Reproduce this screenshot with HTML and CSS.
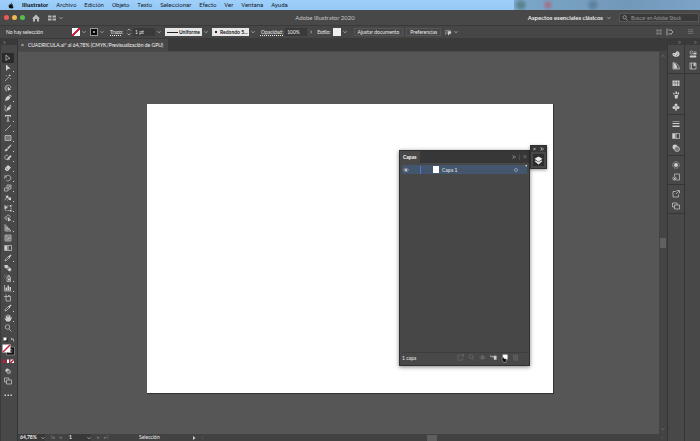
FILE: index.html
```html
<!DOCTYPE html>
<html lang="es">
<head>
<meta charset="utf-8">
<title>Adobe Illustrator 2020</title>
<link rel="stylesheet" href="styles.css">
</head>
<body>
<svg class="defs" aria-hidden="true">
  <symbol id="chev" viewBox="0 0 8 8"><path class="ln" d="M1 2.5l3 3 3-3"/></symbol>
  <symbol id="right" viewBox="0 0 8 8"><path class="ln" d="M2.500 1l3 3-3 3"/></symbol>
  <symbol id="dbl" viewBox="0 0 8 8"><path class="ln" d="M1 1l3 3-3 3M4 1l3 3-3 3"/></symbol>
  <symbol id="select" viewBox="0 0 16 16"><path class="ln" d="M4 2v11l3-3 5-1z"/></symbol>
  <symbol id="direct" viewBox="0 0 16 16"><path d="M4 1v13l4-4 5-1z"/></symbol>
  <symbol id="wand" viewBox="0 0 16 16"><path class="ln" d="M2 14l8-8M11 1v4M9 3h5M4 3l2 2M12 8l2 2"/></symbol>
  <symbol id="lasso" viewBox="0 0 16 16"><path class="ln" d="M7 12C1 13 0 4 6 3c6-2 10 3 6 6M4 9c-3 2 2 3 0 6M6 5c-2 2 1 5 2 3"/><path d="M8 5v9l2-2 4 0z"/></symbol>
  <symbol id="pen" viewBox="0 0 16 16"><path d="M2 14l2-7 5-4 4 4-4 5zM10 2l2-1 3 3-1 2z"/></symbol>
  <symbol id="curve" viewBox="0 0 16 16"><path d="M5 14l1-6 4-4 4 4-4 4zM11 3l1-2 3 3-1 2z"/><path class="ln" d="M1 3c4 0 0 6 1 9s3 2 4 2"/></symbol>
  <symbol id="type" viewBox="0 0 16 16"><path d="M2 2h12v4h-1l-1-2H9v9l2 1v1H5v-1l2-1V4H4L3 6H2z"/></symbol>
  <symbol id="line" viewBox="0 0 16 16"><path class="ln" d="M2 14L14 2"/></symbol>
  <symbol id="rect" viewBox="0 0 16 16"><path class="ln dimfill" d="M2 3h12v10H2z"/></symbol>
  <symbol id="brush" viewBox="0 0 16 16"><path d="M14 1l1 1-6 8-3-2zM5 9l3 2c-1 3-4 4-7 3 2-1 1-4 4-5z"/></symbol>
  <symbol id="shaper" viewBox="0 0 16 16"><path class="ln" d="M8 3C3 1 0 6 2 9s7 3 10 1"/><path d="M6 12l1-4 6-6 2 3-6 6z"/></symbol>
  <symbol id="eraser" viewBox="0 0 16 16"><path d="M2 8l6-6 6 5-6 7H5l-3-3z"/><path class="dk" d="M4 8l4 4"/></symbol>
  <symbol id="rotate" viewBox="0 0 16 16"><path class="ln" d="M4 4c6-5 13 3 8 8-2 2-5 2-7 1M1 10c0-1 0-3 2-5M2 2v4h4"/></symbol>
  <symbol id="scale" viewBox="0 0 16 16"><path class="ln" d="M1 8h7v6H1zM6 8V2h8v8H8M8 8l4-4M9 4h3v3"/></symbol>
  <symbol id="width" viewBox="0 0 16 16"><path class="ln" d="M1 12c4-1 4-7 6-10M3 4l10 8M7 13c2-3 3-6 7-6"/><path d="M5 4h4v4H5zM10 8h4v4h-4z"/></symbol>
  <symbol id="free" viewBox="0 0 16 16"><path class="ln dash" d="M3 4h11v9H3z"/><path d="M1 2v9l3-2 4-1zM12 2h3v3h-3zM12 12h3v3h-3z"/></symbol>
  <symbol id="builder" viewBox="0 0 16 16"><path class="ln" d="M7 12C1 12 0 5 5 5c1-5 9-3 7 2M4 8h5"/><path d="M8 6v9l3-2h4z"/></symbol>
  <symbol id="persp" viewBox="0 0 16 16"><path class="ln" d="M2 1v13h12L2 1M2 6l9 6M6 5v9M2 10h9"/></symbol>
  <symbol id="mesh" viewBox="0 0 16 16"><path class="ln" d="M2 2h12v12H2zM2 6c5-2 7 3 12 0M2 10c5 2 7-2 12 0M6 2c-2 5 2 7 0 12M10 2c2 5-2 7 0 12"/></symbol>
  <symbol id="grad" viewBox="0 0 16 16"><path class="ln" d="M1 3h14v10H1z"/><path class="mid" d="M5 4h5v8H5z"/><path d="M2 4h4v8H2z"/></symbol>
  <symbol id="drop" viewBox="0 0 16 16"><path class="ln" d="M2 14l1-4 6-5 2 2-6 6z"/><path d="M8 4l2 0 3-3 2 2-3 3v2l-1 1z"/></symbol>
  <symbol id="blend" viewBox="0 0 16 16"><path d="M1 2h6l2 4-4 3-4-2z"/><path class="ln" d="M5 6l6 1 3 3-1 4-4-1-3-4z"/><circle cx="11" cy="11" r="3"/></symbol>
  <symbol id="spray" viewBox="0 0 16 16"><path class="ln" d="M6 6h7v9H6zM8 6V3h3v3M1 2h1M3 5h1M1 8h1M4 2h1"/><path d="M8 9h4v4H8z"/></symbol>
  <symbol id="graph" viewBox="0 0 16 16"><path class="ln" d="M1 2v12h14"/><path d="M3 7h3v6H3zM7 3h3v10H7zM11 6h3v7h-3z"/></symbol>
  <symbol id="board" viewBox="0 0 16 16"><path class="ln" d="M4 5h9v9H4zM4 1v4M0 5h4M8 3h3l2 2"/></symbol>
  <symbol id="hand" viewBox="0 0 16 16"><path d="M5 15L1 9l1-1 3 2-2-6 2-1 2 4V1h2v6l2-5 2 1-1 5 3-2 1 1-4 8z"/></symbol>
  <symbol id="zoom" viewBox="0 0 16 16"><circle class="ln" cx="7" cy="6" r="4.500"/><path class="ln" d="M10 10l5 5"/></symbol>
  <symbol id="palette" viewBox="0 0 16 16"><path d="M2 6h5C8 0 16 3 15 9c-1 5-8 6-12 3-3-2-2-4-1-6z"/><path class="dk" d="M4 9h2M8 11h2M11 9h1M11 5v2"/></symbol>
  <symbol id="guide" viewBox="0 0 16 16"><path class="ln" d="M2 1v13h13C14 6 9 2 2 1z"/><path d="M3 2c4 1 7 4 8 11H3z"/></symbol>
  <symbol id="swatches" viewBox="0 0 16 16"><path d="M1 3h14v11H1z"/><path class="dk" d="M1 8h14M6 3v11M11 3v11"/></symbol>
  <symbol id="brushes" viewBox="0 0 16 16"><path d="M5 8h7l-1 7H6zM7 1h3v5H7zM2 3l3 1v3H3zM14 2l-3 2v3h3z"/></symbol>
  <symbol id="club" viewBox="0 0 16 16"><circle cx="8" cy="4" r="3"/><circle cx="4" cy="9" r="3"/><circle cx="12" cy="9" r="3"/><path d="M7 7h2l1 8H6z"/></symbol>
  <symbol id="lines" viewBox="0 0 16 16"><path d="M1 2h14v1H1zM1 6h14v2H1zM1 11h14v3H1z"/></symbol>
  <symbol id="transp" viewBox="0 0 16 16"><circle cx="6" cy="6" r="5"/><circle class="ln midfill" cx="10" cy="10" r="5"/></symbol>
  <symbol id="sun" viewBox="0 0 16 16"><circle cx="8" cy="8" r="4"/><circle class="ln dash" cx="8" cy="8" r="6.500"/></symbol>
  <symbol id="style" viewBox="0 0 16 16"><path class="ln" d="M5 6V2h10v12H9"/><circle class="ln" cx="5" cy="11" r="3.500"/><path d="M4 10h3v3H4z"/></symbol>
  <symbol id="export" viewBox="0 0 16 16"><path class="ln" d="M8 3H2v11h11V9M8 8l6-6M9 1h6v6"/></symbol>
  <symbol id="boards" viewBox="0 0 16 16"><path class="ln" d="M5 10H1V2h9v4M5 6h10v8H5z"/></symbol>
  <symbol id="props" viewBox="0 0 16 16"><path class="ln" d="M10 4h5M1 13h14"/><circle class="ln" cx="5" cy="5" r="3"/><path d="M9 6h6v3H9zM2 11h12v4H2z"/></symbol>
  <symbol id="lib" viewBox="0 0 16 16"><path class="ln" d="M2 2h12v12H2zM5 2v12"/><path d="M9 2h4v6H9z"/></symbol>
  <symbol id="layers" viewBox="0 0 16 16"><path d="M8 1l7 4-7 5-7-5z"/><path d="M1 9l2-1 5 3 5-3 2 1-7 6z"/></symbol>
  <symbol id="eye" viewBox="0 0 16 16"><path class="ln" d="M1 8c4-6 10-6 14 0-4 5-10 5-14 0z"/><circle cx="8" cy="8" r="3"/></symbol>
  <symbol id="menu" viewBox="0 0 16 16"><path class="ln" d="M2 3h12M2 7h12M2 11h12"/></symbol>
</svg>
<div class="app">
  <nav class="menubar" aria-label="Menú principal">
    <svg class="apple" viewBox="0 0 16 16"><path d="M11 0c0 2-1 3-3 4 0-2 1-4 3-4zM8 5c2-1 4-1 6 1-3 2-2 5 1 6-2 4-4 5-7 3-3 2-5-1-6-4C1 6 4 3 8 5z"/></svg>
    <a class="strong" href="#">Illustrator</a><a href="#">Archivo</a><a href="#">Edición</a><a href="#">Objeto</a><a href="#">Texto</a><a href="#">Seleccionar</a><a href="#">Efecto</a><a href="#">Ver</a><a href="#">Ventana</a><a href="#">Ayuda</a>
    <div class="behind"></div>
  </nav>
  <header class="titlebar">
    <div class="left">
      <span class="light red"></span><span class="light yellow"></span><span class="light green"></span>
      <svg class="home" viewBox="0 0 16 16"><path d="M8 1l8 8h-2v6h-4v-5H6v5H2V9H0z"/></svg>
      <svg class="arrange" viewBox="0 0 16 12"><path d="M0 1h7v4H0zM9 1h7v4H9zM0 7h7v4H0zM9 7h7v4H9z"/></svg>
      <svg class="tiny"><use href="#chev"/></svg>
    </div>
    <h1>Adobe Illustrator 2020</h1>
    <div class="right">
      <button class="workspace">Aspectos esenciales clásicos</button>
      <svg class="tiny"><use href="#chev"/></svg>
      <label class="search"><svg class="mini"><use href="#zoom"/></svg><input type="text" aria-label="Buscar" placeholder="Buscar en Adobe Stock"></label>
    </div>
  </header>
  <div class="control">
    <span class="status-text">No hay selección</span>
    <div class="field"><button class="swatch none" aria-label="Relleno"></button><svg class="tiny"><use href="#chev"/></svg></div>
    <div class="field"><button class="swatch stroke" aria-label="Trazo"></button><svg class="tiny"><use href="#chev"/></svg></div>
    <div class="field"><label class="under" for="trazo">Trazo:</label><svg class="spin" viewBox="0 0 8 16"><path class="ln" d="M1 5l3-3 3 3M1 11l3 3 3-3"/></svg><input id="trazo" class="num" type="text" value="1 pt"><svg class="tiny"><use href="#chev"/></svg></div>
    <div class="field"><select class="light-select dashline" aria-label="Perfil"><option>Uniforme</option></select><svg class="tiny"><use href="#chev"/></svg></div>
    <div class="field"><select class="light-select bullet" aria-label="Pincel"><option>Redondo 5...</option></select><svg class="tiny"><use href="#chev"/></svg></div>
    <div class="field"><label class="under" for="opac">Opacidad:</label><input id="opac" class="num" type="text" value="100%"><svg class="tiny"><use href="#right"/></svg></div>
    <div class="field"><span>Estilo:</span><button class="swatch white" aria-label="Estilo"></button><svg class="tiny"><use href="#chev"/></svg></div>
    <div class="buttons"><button>Ajustar documento</button><button>Preferencias</button></div>
    <div class="field"><svg class="icon small" viewBox="0 0 16 16"><path class="ln dash" d="M1 3v10M4 3h10M4 3v8"/><path d="M6 5h8v6h-3l-4 4z"/></svg><svg class="tiny"><use href="#chev"/></svg></div>
    <div class="endicons">
      <svg class="icon dim" viewBox="0 0 16 16"><path d="M3 3h4v4H3zM9 3h4v4H9zM3 9h4v4H3zM9 9h4v4H9z"/></svg>
      <svg class="icon" viewBox="0 0 16 16"><path class="ln" d="M2 1v14M5 4h6M5 12h6M10 4l4 4-4 4"/></svg>
      <svg class="icon dim last"><use href="#menu"/></svg>
    </div>
  </div>
  <main class="work">
    <aside class="tools" aria-label="Herramientas">
      <div class="grip"><svg class="tiny"><use href="#dbl"/></svg></div>
      <div class="list">
        <button class="tool on" aria-label="Selección"><svg><use href="#select"/></svg></button>
        <button class="tool more" aria-label="Selección directa"><svg><use href="#direct"/></svg></button>
        <button class="tool" aria-label="Varita"><svg><use href="#wand"/></svg></button>
        <button class="tool" aria-label="Lazo"><svg><use href="#lasso"/></svg></button>
        <button class="tool more" aria-label="Pluma"><svg><use href="#pen"/></svg></button>
        <button class="tool" aria-label="Curvatura"><svg><use href="#curve"/></svg></button>
        <button class="tool more" aria-label="Texto"><svg><use href="#type"/></svg></button>
        <button class="tool more" aria-label="Línea"><svg><use href="#line"/></svg></button>
        <button class="tool more" aria-label="Rectángulo"><svg><use href="#rect"/></svg></button>
        <button class="tool more" aria-label="Pincel"><svg><use href="#brush"/></svg></button>
        <button class="tool more" aria-label="Shaper"><svg><use href="#shaper"/></svg></button>
        <button class="tool more" aria-label="Borrador"><svg><use href="#eraser"/></svg></button>
        <button class="tool more" aria-label="Rotar"><svg><use href="#rotate"/></svg></button>
        <button class="tool more" aria-label="Escala"><svg><use href="#scale"/></svg></button>
        <button class="tool more" aria-label="Anchura"><svg><use href="#width"/></svg></button>
        <button class="tool more" aria-label="Transformación libre"><svg><use href="#free"/></svg></button>
        <button class="tool more" aria-label="Creador de formas"><svg><use href="#builder"/></svg></button>
        <button class="tool more" aria-label="Perspectiva"><svg><use href="#persp"/></svg></button>
        <button class="tool" aria-label="Malla"><svg><use href="#mesh"/></svg></button>
        <button class="tool" aria-label="Degradado"><svg><use href="#grad"/></svg></button>
        <button class="tool more" aria-label="Cuentagotas"><svg><use href="#drop"/></svg></button>
        <button class="tool" aria-label="Fusión"><svg><use href="#blend"/></svg></button>
        <button class="tool more" aria-label="Rociar símbolos"><svg><use href="#spray"/></svg></button>
        <button class="tool more" aria-label="Gráfica"><svg><use href="#graph"/></svg></button>
        <button class="tool" aria-label="Mesa de trabajo"><svg><use href="#board"/></svg></button>
        <button class="tool more" aria-label="Sector"><svg><use href="#drop"/></svg></button>
        <button class="tool more" aria-label="Mano"><svg><use href="#hand"/></svg></button>
        <button class="tool" aria-label="Zoom"><svg><use href="#zoom"/></svg></button>
      </div>
      <svg class="paint" viewBox="0 0 28 58">
        <path class="blk" d="M5 3h6v6H5z"/><path class="wh" d="M3 1h6v6H3z"/><path class="ln" d="M18 4h5v5M20 2l-2 2 2 2"/>
        <path class="blk ring" d="M11 22h12v12H11z"/><path class="edge" d="M9 20h16v16H9zM14 25h6v6h-6z"/>
        <path class="wh" d="M1 15h16v16H1z"/><path class="redln" d="M2 30L16 16"/>
        <path class="rd" d="M1 45h6v7H1z"/><path class="wh" d="M10 45h4v7h-4zM17 45h7v7h-7z"/><path class="rd" d="M14 45h2v7h-2z"/><path class="redln" d="M17 52l7-7"/>
      </svg>
      <button class="tool" aria-label="Modo de dibujo"><svg class="mode-icon"><use href="#transp"/></svg></button>
      <button class="tool" aria-label="Modo de pantalla"><svg><use href="#boards"/></svg></button>
      <button class="tool dots" aria-label="Más"><svg viewBox="0 0 16 16"><path d="M1 7h3v3H1zM7 7h3v3H7zM13 7h3v3h-3z"/></svg></button>
    </aside>
    <section class="doc">
      <div class="tabs"><div class="tab"><button class="x" aria-label="Cerrar">×</button><span>CUADRICULA.ai* al 64,78% (CMYK/Previsualización de GPU)</span></div></div>
      <div class="canvas">
        <div class="artboard"></div>
        <section class="panel" aria-label="Capas">
          <div class="panel-head"><h2>Capas</h2><div class="panel-tools"><svg class="tiny"><use href="#dbl"/></svg><span>|</span><svg class="tiny"><use href="#menu"/></svg></div></div>
          <div class="layers"><div class="layer"><svg class="eye"><use href="#eye"/></svg><span class="bar"></span><span class="thumb"></span><span class="name">Capa 1</span><span class="target"></span><span class="corner"></span></div></div>
          <div class="panel-foot"><span>1 capa</span><div class="acts">
            <svg class="faint"><use href="#export"/></svg><svg class="faint"><use href="#zoom"/></svg><svg class="faint"><use href="#eye"/></svg>
            <svg viewBox="0 0 16 16"><path d="M8 4h7v9H9z"/><path class="ln" d="M1 3v3h6M5 4l2 2-2 2"/></svg>
            <svg class="new" viewBox="0 0 16 20"><path class="wh" d="M4 1h11v11H4z"/><path class="blk cursor" d="M3 8l2-2 2 4 6 1-2 8H6l-4-6z"/></svg>
            <svg class="faint" viewBox="0 0 16 16"><path class="ln" d="M2 4h12M4 4v10h8V4M6 2h4M7 6v6M9 6v6"/></svg>
          </div></div>
        </section>
        <div class="flyout"><div class="flyhead"><span>×</span><svg class="tiny"><use href="#dbl"/></svg></div><button aria-label="Capas"><svg><use href="#layers"/></svg></button></div>
      </div>
      <div class="vscroll"><svg class="tiny" viewBox="0 0 8 8"><path class="ln" d="M1 5.500l3-3 3 3"/></svg><span class="vthumb"></span><svg class="tiny"><use href="#chev"/></svg></div>
      <footer class="status">
        <div class="zoomlevel"><span>64,78%</span><svg class="tiny"><use href="#chev"/></svg></div>
        <div class="nav faint"><span>I◂</span><span>◂</span></div>
        <div class="page"><span>1</span><svg class="tiny"><use href="#chev"/></svg></div>
        <div class="nav faint"><span>▸</span><span>▸I</span></div>
        <span class="mode">Selección</span><svg class="tiny play" viewBox="0 0 8 8"><path d="M2 0l5 4-5 4z"/></svg><span class="faint">‹</span>
        <div class="hscroll"><span class="hthumb"></span></div><span class="end faint">›</span>
      </footer>
    </section>
    <aside class="dock">
      <div class="grip"><svg class="tiny"><use href="#dbl"/></svg></div>
      <div class="group"><svg><use href="#palette"/></svg><svg><use href="#guide"/></svg></div>
      <div class="group"><svg><use href="#swatches"/></svg><svg><use href="#brushes"/></svg><svg><use href="#club"/></svg></div>
      <div class="group"><svg><use href="#lines"/></svg><svg><use href="#grad"/></svg><svg><use href="#transp"/></svg></div>
      <div class="group"><svg><use href="#sun"/></svg><svg><use href="#style"/></svg></div>
      <div class="group"><svg><use href="#export"/></svg><svg><use href="#boards"/></svg></div>
    </aside>
    <aside class="dock">
      <div class="grip"><svg class="tiny"><use href="#dbl"/></svg></div>
      <div class="group"><svg><use href="#props"/></svg><svg><use href="#lib"/></svg></div>
    </aside>
  </main>
</div>
</body>
</html>
```
FILE: styles.css
```css
* { box-sizing: border-box; }
body { margin: 0; font: 5px/8px Lato, "Noto Sans", sans-serif; color: #ececec; background: #484848; }
button, input, select { font: inherit; color: inherit; margin: 0; padding: 0; border: 0; background: none; border-radius: 0; appearance: none; outline: 0; }
h1, h2 { margin: 0; font: inherit; }
svg { display: block; flex: none; fill: #cecece; }
.defs { position: absolute; width: 0; height: 0; }
.ln { fill: none; stroke: #c4c4c4; stroke-width: 1.5; }
.dimfill { fill: #777; }
.midfill { fill: #777; }
.mid { fill: #888; }
.dash { stroke-dasharray: 2 1; }
.dk { fill: none; stroke: #484848; stroke-width: 1; }
.wh { fill: #fff; }
.blk { fill: #111; }
.rd { fill: #b3203f; }
.redln { stroke: #c51f3c; stroke-width: 3; }
.edge { fill: none; stroke: #aaa; stroke-width: 1; }
.ring { stroke: #111; stroke-width: 3; }
.cursor { stroke: #ddd; stroke-width: 1; }
.tiny { width: 4px; height: 4px; }
.icon { width: 8px; height: 8px; }
.small { width: 7px; height: 7px; }
.dim { opacity: .5; }
.faint { opacity: .3; }
.app { display: flex; flex-direction: column; min-height: 100vh; }

.menubar { display: flex; align-items: center; gap: 8px; height: 10px; padding-left: 8px; background: linear-gradient(#9fcffa, #94c8f6); color: #16202b; font: 6px/10px Roboto, sans-serif; }
.menubar a { color: inherit; text-decoration: none; }
.menubar .strong { font-weight: 700; }
.apple { width: 6px; height: 7px; fill: #111; }
.behind { width: 186px; height: 10px; margin-left: auto; background: radial-gradient(circle at 7px 5px, #5a8490 2px, transparent 7px), radial-gradient(circle at 34px 5px, #a07490 1px, transparent 6px), radial-gradient(circle at 79px 5px, #5e83a0 2px, transparent 7px), linear-gradient(90deg, #7ba7c8, #7298b8 60%, #7ba4c6); }

.titlebar { display: grid; grid-template-columns: 1fr auto 1fr; align-items: center; height: 15px; background: #484848; }
.titlebar h1 { font-size: 6px; color: #c6c6c6; margin-right: 50px; }
.left, .right, .field, .buttons, .endicons { display: flex; align-items: center; }
.left { gap: 3px; padding-left: 4px; }
.light { width: 5px; height: 5px; border-radius: 50%; }
.red { background: #ee5a55; }
.yellow { background: #edb94a; }
.green { background: #55c14b; }
.home { width: 8px; height: 8px; margin-left: 4px; fill: #bbb; }
.arrange { width: 8px; height: 6px; margin-left: 5px; fill: #b5b5b5; }
.titlebar .right { justify-content: flex-end; gap: 5px; padding-right: 3px; }
.workspace { font-size: 6px; font-weight: 700; color: #e8e8e8; }
.search { display: flex; align-items: center; gap: 3px; width: 80px; height: 9px; margin-left: 4px; padding-left: 2px; border: 1px solid #555; background: #393939; }
.titlebar .right { padding-right: 1px; gap: 4px; }
.search input { width: 62px; height: 7px; }
.search input::placeholder { color: #999; opacity: 1; }
.mini { width: 6px; height: 6px; }

.control { display: flex; align-items: center; gap: 4px; height: 14px; padding: 0 6px; background: #464646; border-top: 1px solid #3a3a3a; border-bottom: 1px solid #3a3a3a; white-space: nowrap; }
.status-text { width: 62px; }
.field { gap: 2px; }
.swatch { width: 8px; height: 8px; }
.none { background: linear-gradient(135deg, #fff 40%, #c51f3c 44%, #c51f3c 56%, #fff 60%); }
.stroke { background: #999; border: 3px solid #0a0a0a; outline: 1px solid #999; outline-offset: -1px; }
.white { background: #eee; }
.under { text-decoration: underline dotted; }
.field .under { margin-left: 2px; }
.spin { width: 4px; height: 8px; margin-left: 2px; }
.num { width: 22px; height: 8px; padding-left: 2px; background: #3a3a3a; }
.light-select { height: 8px; width: 37px; background: #e7e7e7; color: #222; font-weight: 700; }
.dashline { padding-left: 14px; background: linear-gradient(#222, #222) 2px 4px / 11px 1px no-repeat #e7e7e7; }
.bullet { padding-left: 8px; background: linear-gradient(#222, #222) 3px 3px / 2px 2px no-repeat #e7e7e7; }
.buttons { gap: 3px; margin-left: 3px; }
.buttons button { height: 8px; padding: 0 3px; line-height: 6px; border: 1px solid #565656; }
.endicons { margin-left: auto; gap: 3px; }
.last { width: 7px; margin-left: 10px; }

.work { display: grid; grid-template-columns: 18px 1fr 17px 16px; flex: 1; }
.grip { display: flex; align-items: center; height: 6px; background: #3a3a3a; padding-left: 2px; }
.grip .tiny { width: 3px; height: 3px; opacity: .6; }
.tools { background: #484848; border-left: 1px solid #3a3a3a; border-right: 1px solid #343434; }
.list { padding-top: 8px; }
.tool { position: relative; display: flex; align-items: center; justify-content: center; width: 12px; height: 10px; margin-left: 1px; }
.tool svg { width: 8px; height: 8px; }
.tool .mode-icon { width: 6px; height: 6px; }
.on { background: #2b2b2b; }
.more::after { content: ""; position: absolute; right: 0; bottom: 1px; width: 1px; height: 1px; background: #ccc; }
.paint { width: 14px; height: 29px; margin: 4px 0 0 1px; }
.dots { margin-top: 4px; }

.doc { display: grid; grid-template-columns: 1fr 8px; grid-template-rows: 12px 1fr 7px; min-width: 0; background: #444; }
.tabs { grid-column: 1 / 3; display: flex; background: #3a3a3a; }
.tab { display: flex; align-items: center; gap: 4px; padding: 0 5px 0 3px; background: #484848; color: #f4f4f4; white-space: nowrap; }
.x { line-height: 8px; }
.canvas { position: relative; background: #565656; border-top: 1px solid #4c4c4c; }
.artboard { position: absolute; left: 129px; top: 52px; width: 407px; height: 290px; background: #fff; border: 1px solid #333; border-width: 0 1px 1px 0; }
.panel { position: absolute; left: 381px; top: 98px; width: 131px; height: 216px; display: flex; flex-direction: column; background: #484848; border: 1px solid #303030; box-shadow: 0 1px 4px rgba(0, 0, 0, .5); }
.panel-head { display: flex; justify-content: space-between; height: 12px; background: #373737; }
.panel-head h2 { padding: 2px 4px 0 3px; background: #484848; font-weight: 900; color: #eee; }
.panel-tools { display: flex; align-items: center; gap: 3px; padding-right: 2px; color: #999; opacity: .7; }
.layers { flex: 1; margin: 2px 2px 0; background: #474747; border-bottom: 1px solid #3d3d3d; }
.layer { position: relative; display: flex; align-items: center; height: 9px; background: #43566d; }
.eye { width: 6px; height: 6px; margin-left: 1px; }
.bar { width: 1px; height: 8px; margin-left: 11px; background: #4b7be0; }
.thumb { width: 6px; height: 7px; margin-left: 12px; background: #fff; }
.name { margin-left: 3px; }
.target { width: 4px; height: 4px; margin: 0 9px 0 auto; border: 1px solid #8b98a8; border-radius: 50%; }
.corner { position: absolute; right: 0; top: 0; border: 1px solid #ddd; border-left-color: transparent; border-bottom-color: transparent; }
.panel-foot { display: flex; justify-content: space-between; align-items: center; height: 12px; padding: 0 10px 2px 2px; }
.acts { display: flex; gap: 4px; }
.acts svg { width: 7px; height: 7px; }
.acts .new { height: 9px; }
.flyout { position: absolute; left: 512px; top: 93px; width: 17px; height: 24px; background: #484848; border: 1px solid #303030; box-shadow: 0 1px 3px rgba(0, 0, 0, .4); }
.flyhead { display: flex; align-items: center; justify-content: space-between; height: 6px; padding: 0 2px; line-height: 6px; background: #373737; }
.flyout button { display: grid; place-items: center; width: 11px; height: 12px; margin: 2px; background: #2e2e2e; }
.flyout button svg { width: 9px; height: 9px; fill: #eee; }
.vscroll { display: flex; flex-direction: column; align-items: center; justify-content: space-between; padding: 3px 0; background: #444; }
.vscroll .tiny { opacity: .4; }
.vthumb { width: 6px; height: 10px; background: #606060; }
.status { grid-column: 1 / 3; display: flex; align-items: center; gap: 6px; height: 7px; padding: 0 4px 0 2px; background: #424242; line-height: 7px; white-space: nowrap; }
.zoomlevel, .page { display: flex; align-items: center; justify-content: space-between; width: 25px; font-weight: 700; background: #383838; }
.page { width: 22px; }
.nav { display: flex; gap: 4px; width: 12px; }
.mode { margin-left: 24px; }
.play { margin-left: 26px; }
.hscroll { flex: 1; display: flex; justify-content: center; }
.hthumb { width: 10px; height: 6px; background: #5e5e5e; }

.dock { background: #484848; border-left: 1px solid #353535; }
.dock .grip { justify-content: flex-end; padding-right: 3px; }
.group { display: flex; flex-direction: column; align-items: center; gap: 4px; padding: 5px 0 3px; border-bottom: 1px solid #363636; }
.group svg { width: 8px; height: 8px; }
```
